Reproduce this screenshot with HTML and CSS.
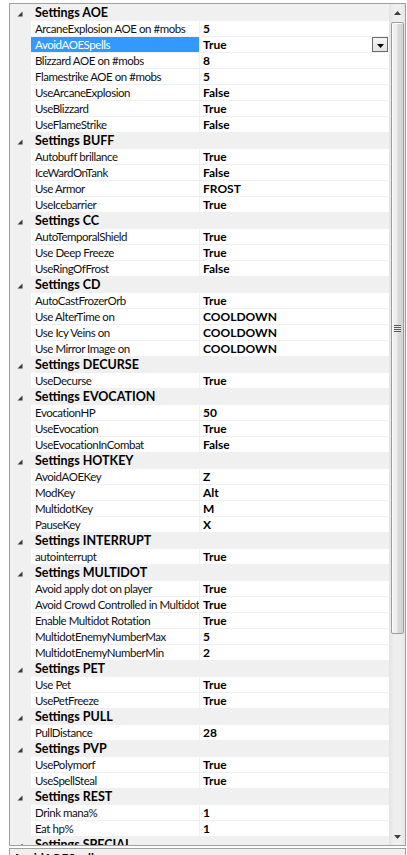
FILE: index.html
```html
<!DOCTYPE html>
<html>
<head>
<meta charset="utf-8">
<link rel="stylesheet" href="styles.css">
</head>
<body>
<div class="grid">
  <div class="rows">
    <div class="cat"><span class="gut"><svg class="exp" width="6" height="6" viewBox="0 0 6 6"><polygon points="5.5,0.5 5.5,5.5 0.5,5.5"/></svg></span><span class="cname">Settings AOE</span></div>
    <div class="row"><span class="gut"></span><span class="name">ArcaneExplosion AOE on #mobs</span><span class="val">5</span></div>
    <div class="row sel"><span class="gut"></span><span class="name">AvoidAOESpells</span><span class="val">True<span class="dd"><svg width="7" height="4" viewBox="0 0 7 4"><polygon points="0,0 7,0 3.5,4"/></svg></span></span></div>
    <div class="row"><span class="gut"></span><span class="name">Blizzard AOE on #mobs</span><span class="val">8</span></div>
    <div class="row"><span class="gut"></span><span class="name">Flamestrike AOE on #mobs</span><span class="val">5</span></div>
    <div class="row"><span class="gut"></span><span class="name">UseArcaneExplosion</span><span class="val">False</span></div>
    <div class="row"><span class="gut"></span><span class="name">UseBlizzard</span><span class="val">True</span></div>
    <div class="row"><span class="gut"></span><span class="name">UseFlameStrike</span><span class="val">False</span></div>

    <div class="cat"><span class="gut"><svg class="exp" width="6" height="6" viewBox="0 0 6 6"><polygon points="5.5,0.5 5.5,5.5 0.5,5.5"/></svg></span><span class="cname">Settings BUFF</span></div>
    <div class="row"><span class="gut"></span><span class="name">Autobuff brillance</span><span class="val">True</span></div>
    <div class="row"><span class="gut"></span><span class="name">IceWardOnTank</span><span class="val">False</span></div>
    <div class="row"><span class="gut"></span><span class="name">Use Armor</span><span class="val">FROST</span></div>
    <div class="row"><span class="gut"></span><span class="name">UseIcebarrier</span><span class="val">True</span></div>

    <div class="cat"><span class="gut"><svg class="exp" width="6" height="6" viewBox="0 0 6 6"><polygon points="5.5,0.5 5.5,5.5 0.5,5.5"/></svg></span><span class="cname">Settings CC</span></div>
    <div class="row"><span class="gut"></span><span class="name">AutoTemporalShield</span><span class="val">True</span></div>
    <div class="row"><span class="gut"></span><span class="name">Use Deep Freeze</span><span class="val">True</span></div>
    <div class="row"><span class="gut"></span><span class="name">UseRingOfFrost</span><span class="val">False</span></div>

    <div class="cat"><span class="gut"><svg class="exp" width="6" height="6" viewBox="0 0 6 6"><polygon points="5.5,0.5 5.5,5.5 0.5,5.5"/></svg></span><span class="cname">Settings CD</span></div>
    <div class="row"><span class="gut"></span><span class="name">AutoCastFrozerOrb</span><span class="val">True</span></div>
    <div class="row"><span class="gut"></span><span class="name">Use AlterTime on</span><span class="val">COOLDOWN</span></div>
    <div class="row"><span class="gut"></span><span class="name">Use Icy Veins on</span><span class="val">COOLDOWN</span></div>
    <div class="row"><span class="gut"></span><span class="name">Use Mirror Image on</span><span class="val">COOLDOWN</span></div>

    <div class="cat"><span class="gut"><svg class="exp" width="6" height="6" viewBox="0 0 6 6"><polygon points="5.5,0.5 5.5,5.5 0.5,5.5"/></svg></span><span class="cname">Settings DECURSE</span></div>
    <div class="row"><span class="gut"></span><span class="name">UseDecurse</span><span class="val">True</span></div>

    <div class="cat"><span class="gut"><svg class="exp" width="6" height="6" viewBox="0 0 6 6"><polygon points="5.5,0.5 5.5,5.5 0.5,5.5"/></svg></span><span class="cname">Settings EVOCATION</span></div>
    <div class="row"><span class="gut"></span><span class="name">EvocationHP</span><span class="val">50</span></div>
    <div class="row"><span class="gut"></span><span class="name">UseEvocation</span><span class="val">True</span></div>
    <div class="row"><span class="gut"></span><span class="name">UseEvocationInCombat</span><span class="val">False</span></div>

    <div class="cat"><span class="gut"><svg class="exp" width="6" height="6" viewBox="0 0 6 6"><polygon points="5.5,0.5 5.5,5.5 0.5,5.5"/></svg></span><span class="cname">Settings HOTKEY</span></div>
    <div class="row"><span class="gut"></span><span class="name">AvoidAOEKey</span><span class="val">Z</span></div>
    <div class="row"><span class="gut"></span><span class="name">ModKey</span><span class="val">Alt</span></div>
    <div class="row"><span class="gut"></span><span class="name">MultidotKey</span><span class="val">M</span></div>
    <div class="row"><span class="gut"></span><span class="name">PauseKey</span><span class="val">X</span></div>

    <div class="cat"><span class="gut"><svg class="exp" width="6" height="6" viewBox="0 0 6 6"><polygon points="5.5,0.5 5.5,5.5 0.5,5.5"/></svg></span><span class="cname">Settings INTERRUPT</span></div>
    <div class="row"><span class="gut"></span><span class="name">autointerrupt</span><span class="val">True</span></div>

    <div class="cat"><span class="gut"><svg class="exp" width="6" height="6" viewBox="0 0 6 6"><polygon points="5.5,0.5 5.5,5.5 0.5,5.5"/></svg></span><span class="cname">Settings MULTIDOT</span></div>
    <div class="row"><span class="gut"></span><span class="name">Avoid apply dot on player</span><span class="val">True</span></div>
    <div class="row"><span class="gut"></span><span class="name">Avoid Crowd Controlled in Multidot</span><span class="val">True</span></div>
    <div class="row"><span class="gut"></span><span class="name">Enable Multidot Rotation</span><span class="val">True</span></div>
    <div class="row"><span class="gut"></span><span class="name">MultidotEnemyNumberMax</span><span class="val">5</span></div>
    <div class="row"><span class="gut"></span><span class="name">MultidotEnemyNumberMin</span><span class="val">2</span></div>

    <div class="cat"><span class="gut"><svg class="exp" width="6" height="6" viewBox="0 0 6 6"><polygon points="5.5,0.5 5.5,5.5 0.5,5.5"/></svg></span><span class="cname">Settings PET</span></div>
    <div class="row"><span class="gut"></span><span class="name">Use Pet</span><span class="val">True</span></div>
    <div class="row"><span class="gut"></span><span class="name">UsePetFreeze</span><span class="val">True</span></div>

    <div class="cat"><span class="gut"><svg class="exp" width="6" height="6" viewBox="0 0 6 6"><polygon points="5.5,0.5 5.5,5.5 0.5,5.5"/></svg></span><span class="cname">Settings PULL</span></div>
    <div class="row"><span class="gut"></span><span class="name">PullDistance</span><span class="val">28</span></div>

    <div class="cat"><span class="gut"><svg class="exp" width="6" height="6" viewBox="0 0 6 6"><polygon points="5.5,0.5 5.5,5.5 0.5,5.5"/></svg></span><span class="cname">Settings PVP</span></div>
    <div class="row"><span class="gut"></span><span class="name">UsePolymorf</span><span class="val">True</span></div>
    <div class="row"><span class="gut"></span><span class="name">UseSpellSteal</span><span class="val">True</span></div>

    <div class="cat"><span class="gut"><svg class="exp" width="6" height="6" viewBox="0 0 6 6"><polygon points="5.5,0.5 5.5,5.5 0.5,5.5"/></svg></span><span class="cname">Settings REST</span></div>
    <div class="row"><span class="gut"></span><span class="name">Drink mana%</span><span class="val">1</span></div>
    <div class="row"><span class="gut"></span><span class="name">Eat hp%</span><span class="val">1</span></div>

    <div class="cat"><span class="gut"><svg class="exp" width="6" height="6" viewBox="0 0 6 6"><polygon points="5.5,0.5 5.5,5.5 0.5,5.5"/></svg></span><span class="cname">Settings SPECIAL</span></div>
  </div>
  <div class="sbar">
    <div class="sbtn"><svg width="7" height="4" viewBox="0 0 7 4"><polygon points="3.5,0 7,4 0,4"/></svg></div>
    <div class="strack">
      <div class="thumb"><span class="grip"></span></div>
    </div>
    <div class="sbtn"><svg width="7" height="4" viewBox="0 0 7 4"><polygon points="0,0 7,0 3.5,4"/></svg></div>
  </div>
</div>
<div class="desc">
  <div class="dtitle">AvoidAOESpells</div>
</div>
</body>
</html>
```
FILE: styles.css
```css
html, body {
  margin: 0;
  padding: 0;
  background: #ffffff;
  overflow: hidden;
  height: 855px;
}
body {
  font-family: "Lato", "Liberation Sans", sans-serif;
  font-size: 12px;
  color: #000;
}
.grid {
  margin: 3px 0 0 9px;
  width: 395px;
  height: 841px;
  border: 1px solid #a0a0a0;
  display: flex;
  overflow: hidden;
  background: #f0f0f0;
}
.rows {
  width: 379px;
  padding-top: 1px;
  overflow: hidden;
}
.cat, .row {
  display: flex;
  height: 16px;
}
.gut {
  width: 21px;
  flex: none;
  background: #f0f0f0;
  display: flex;
  align-items: center;
  justify-content: center;
}
.exp {
  fill: #3a3a3a;
  margin-left: -1px;
  margin-top: 1px;
}
.cat {
  background: #f0f0f0;
}
.cname {
  font-weight: bold;
  padding-left: 4px;
  line-height: 16px;
  font-size: 12.5px;
}
.name {
  width: 164px;
  flex: none;
  padding-left: 4px;
  height: 15px;
  line-height: 15px;
  font-size: 11.5px;
  letter-spacing: -0.45px;
  color: #111;
  background: #fff;
  border-bottom: 1px solid #f0f0f0;
  white-space: nowrap;
  overflow: hidden;
}
.val {
  flex: 1;
  position: relative;
  height: 15px;
  line-height: 15px;
  padding-left: 3px;
  font-weight: bold;
  background: #fff;
  border-left: 1px solid #f0f0f0;
  border-bottom: 1px solid #f0f0f0;
}
.sel .name {
  background: #3399ff;
  color: #fff;
}
.dd {
  position: absolute;
  right: 1px;
  top: 0;
  width: 14px;
  height: 13px;
  border: 1px solid #6a6a6a;
  background: linear-gradient(#f6f6f6, #e4e4e4);
  display: flex;
  align-items: center;
  justify-content: center;
}
.dd svg {
  fill: #000;
  margin-top: 2px;
}
.sbar {
  width: 16px;
  display: flex;
  flex-direction: column;
  background: linear-gradient(90deg, #e3e3e3, #efefef 30%, #efefef 70%, #e6e6e6);
}
.sbtn {
  height: 17px;
  display: flex;
  align-items: center;
  justify-content: center;
  flex: none;
}
.sbtn svg {
  fill: #404040;
}
.strack {
  flex: 1;
  padding: 1px 1px 0 2px;
}
.thumb {
  height: 610px;
  border: 1px solid #9c9c9c;
  border-radius: 2px;
  background: linear-gradient(90deg, #f2f2f2, #ebebeb 45%, #d9d9d9 55%, #d4d4d4);
  box-shadow: inset 1px 1px 0 #fcfcfc;
  display: flex;
  align-items: center;
  justify-content: center;
}
.grip {
  width: 7px;
  height: 7px;
  background: repeating-linear-gradient(#5a5a5a 0 1px, #e8e8e8 1px 2px);
}
.desc {
  margin: 2px 0 0 9px;
  width: 395px;
  height: 60px;
  border: 1px solid #a0a0a0;
  background: #f0f0f0;
}
.dtitle {
  font-weight: bold;
  padding: 2px 0 0 3px;
  line-height: 14px;
}
```
